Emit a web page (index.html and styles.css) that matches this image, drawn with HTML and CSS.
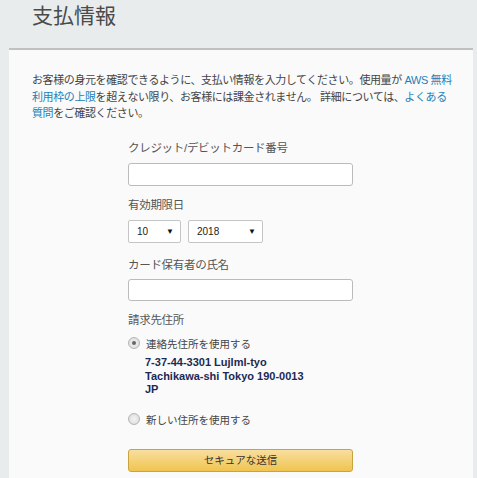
FILE: index.html
```html
<!DOCTYPE html>
<html lang="ja">
<head>
<meta charset="utf-8">
<link rel="stylesheet" href="styles.css">
</head>
<body>
<div class="page">
  <h1 class="title">支払情報</h1>
  <div class="panel">
    <p class="intro">お客様の身元を確認できるように、支払い情報を入力してください。使用量が <a class="link">AWS 無料<br>利用枠の上限</a>を超えない限り、お客様には課金されません。 詳細については、<a class="link">よくある<br>質問</a>をご確認ください。</p>
    <div class="form">
      <div class="label l1">クレジット/デビットカード番号</div>
      <div class="input i1"></div>
      <div class="label l2">有効期限日</div>
      <div class="selects">
        <div class="select month"><span>10</span><span class="arrow">▼</span></div>
        <div class="select year"><span>2018</span><span class="arrow">▼</span></div>
      </div>
      <div class="label l3">カード保有者の氏名</div>
      <div class="input i2"></div>
      <div class="label l4">請求先住所</div>
      <div class="radio-row"><span class="radio checked"></span><span>連絡先住所を使用する</span></div>
      <div class="address">
        <div>7-37-44-3301 Lujlml-tyo</div>
        <div>Tachikawa-shi Tokyo 190-0013</div>
        <div>JP</div>
      </div>
      <div class="radio-row second"><span class="radio"></span><span>新しい住所を使用する</span></div>
      <div class="button">セキュアな送信</div>
    </div>
  </div>
</div>
</body>
</html>
```
FILE: styles.css
```css
html, body {
  margin: 0;
  padding: 0;
  background: #e9ecec;
  font-family: "Liberation Sans", "Noto Sans CJK JP", sans-serif;
  color: #444;
}
.page {
  width: 477px;
  height: 478px;
  overflow: hidden;
}
.title {
  margin: 0;
  padding: 4px 0 0 32px;
  height: 48px;
  box-sizing: border-box;
  font-size: 21px;
  font-weight: normal;
  color: #4a4a4a;
  line-height: 24px;
}
.panel {
  margin-left: 9px;
  width: 464px;
  height: 430px;
  background: #fafafa;
  border-top: 2px solid #bfc1c1;
  box-sizing: border-box;
  padding: 22px 0 0 23px;
}
.intro {
  margin: 0;
  font-size: 11px;
  letter-spacing: -0.4px;
  line-height: 16.5px;
  color: #444;
  white-space: nowrap;
}
.link {
  color: #1f7fb8;
}
.form {
  margin-left: 96px;
  margin-top: 18.5px;
  width: 225px;
  display: flex;
  flex-direction: column;
}
.label {
  font-size: 11.5px;
  letter-spacing: -0.3px;
  line-height: 16px;
  color: #555;
}
.l1, .l2 { margin-bottom: 7px; }
.l3 { margin-bottom: 6px; }
.l4 { margin-bottom: 8px; }
.input {
  border: 1px solid #b9bcbc;
  border-radius: 3px;
  background: #fff;
  box-sizing: border-box;
}
.i1 { height: 23px; margin-bottom: 11px; }
.i2 { height: 22px; margin-bottom: 11px; }
.selects {
  display: flex;
  gap: 7px;
  margin-bottom: 14px;
}
.select {
  height: 23px;
  border: 1px solid #c4c6c6;
  border-radius: 2px;
  background: #fff;
  display: flex;
  align-items: center;
  justify-content: space-between;
  padding: 0 6px 0 8px;
  font-size: 10px;
  color: #222;
  box-sizing: border-box;
}
.select .arrow {
  font-size: 8px;
  color: #111;
}
.month { width: 53px; }
.year { width: 75px; }
.radio-row {
  display: flex;
  align-items: center;
  gap: 6px;
  font-size: 10.5px;
  color: #444;
  line-height: 16px;
  height: 16px;
}
.radio {
  width: 10px;
  height: 10px;
  border-radius: 50%;
  border: 1px solid #b5b5b5;
  background: radial-gradient(circle, #f4f4f4 0%, #d8d8d8 100%);
  position: relative;
  margin-top: -2px;
  flex: none;
}
.radio.checked::after {
  content: "";
  position: absolute;
  left: 3px;
  top: 3px;
  width: 4px;
  height: 4px;
  border-radius: 50%;
  background: #666;
}
.address {
  margin: 4px 0 0 17px;
  font-size: 11px;
  font-weight: bold;
  line-height: 13.5px;
  color: #1b2a55;
}
.radio-row.second {
  margin-top: 15.5px;
}
.button {
  margin-top: 21px;
  height: 23px;
  box-sizing: border-box;
  border: 1px solid #c9a43e;
  border-radius: 3px;
  background: linear-gradient(#f8df9f, #f0c44f);
  text-align: center;
  font-size: 10.5px;
  line-height: 21px;
  color: #333;
}
```
